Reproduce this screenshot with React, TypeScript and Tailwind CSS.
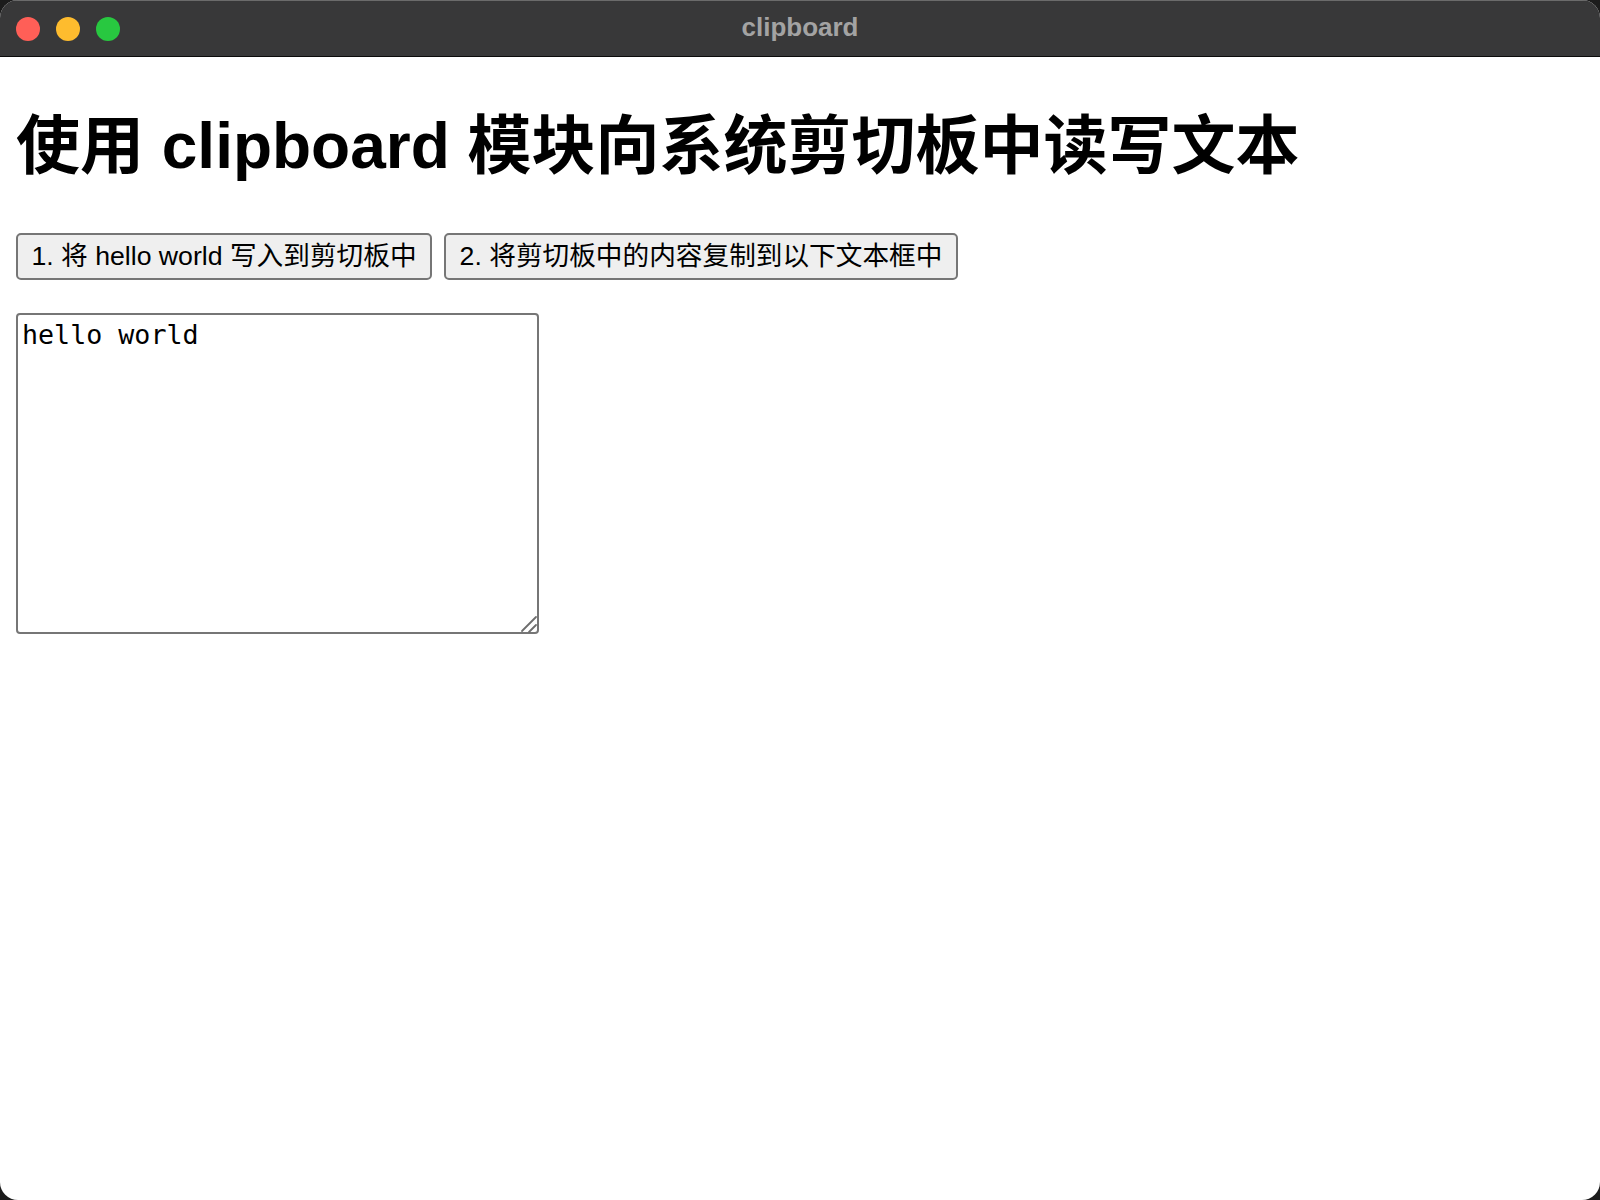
import React from 'react';

const SANS = "font-['Liberation_Sans','Noto_Sans_CJK_SC',sans-serif]";

function TrafficLights() {
  return (
    <div className="flex items-center gap-[16px] pl-[16px]">
      <span className="h-[24px] w-[24px] rounded-full bg-[#ff5f57]" />
      <span className="h-[24px] w-[24px] rounded-full bg-[#febc2e]" />
      <span className="h-[24px] w-[24px] rounded-full bg-[#28c840]" />
    </div>
  );
}

function TitleBar() {
  return (
    <div className="grid h-[57px] grid-cols-[1fr_auto_1fr] items-center border-t border-b border-t-[#6b6b6b] border-b-[#0c0c0c] bg-[#383839]">
      <TrafficLights />
      <span className={`${SANS} mb-[4px] text-[26px] font-bold leading-none text-[#a3a3a3]`}>clipboard</span>
      <span />
    </div>
  );
}

// the native grip is tiny in headless chrome, so draw the mac-style one
function ResizeGrip() {
  return (
    <svg
      className="pointer-events-none absolute bottom-0 right-0"
      width="20"
      height="20"
      viewBox="0 0 20 20"
      fill="none"
      stroke="#6e6e6e"
      strokeWidth="1.8"
      strokeLinecap="round"
    >
      <path d="M3 17 L17 3" />
      <path d="M10 18 L17 11" />
    </svg>
  );
}

export default function App() {
  return (
    <div className="h-[1200px] w-[1600px] bg-[#1c1c1c]">
      <div className="flex h-full flex-col overflow-hidden rounded-[18px] bg-white">
        <TitleBar />
        <main className={`${SANS} px-[16px] text-black`}>
          <h1 className="mt-[52px] text-[64px] font-bold leading-[74px]">
            使用 clipboard 模块向系统剪切板中读写文本
          </h1>

          <div className="mt-[50px] flex gap-[12px]">
            <button
              type="button"
              className="flex h-[47px] w-[416px] items-center justify-center rounded-[5px] border-2 border-[#767676] bg-[#efefef] text-[26.67px] leading-none"
            >
              1. 将 hello world 写入到剪切板中
            </button>
            <button
              type="button"
              className="flex h-[47px] w-[514px] items-center justify-center rounded-[5px] border-2 border-[#767676] bg-[#efefef] text-[26.67px] leading-none"
            >
              2. 将剪切板中的内容复制到以下文本框中
            </button>
          </div>

          <div className="relative mt-[33px] h-[321px] w-[523px]">
            <textarea
              defaultValue="hello world"
              className="block h-full w-full resize-none rounded-[4px] border-2 border-[#767676] bg-white p-[4px] font-['DejaVu_Sans_Mono',monospace] text-[26.67px] leading-[31px] text-black outline-none"
            />
            <ResizeGrip />
          </div>
        </main>
      </div>
    </div>
  );
}
